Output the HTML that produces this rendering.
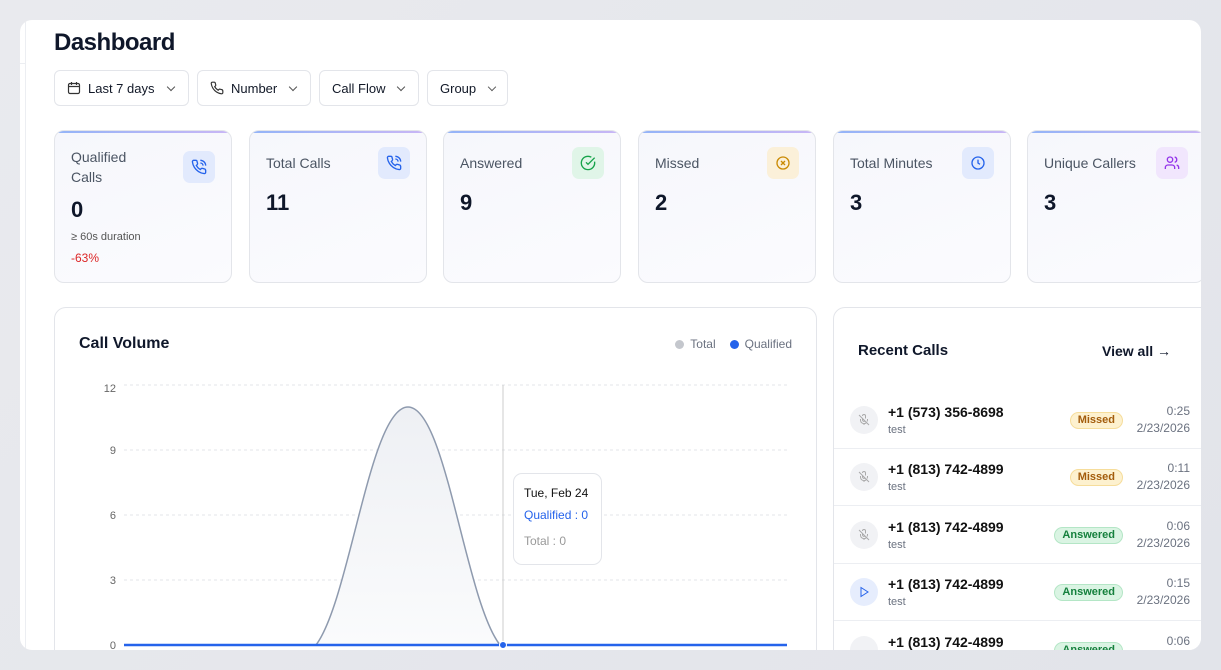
<!DOCTYPE html>
<html><head><meta charset="utf-8"><style>
*{box-sizing:border-box;margin:0;padding:0}
body{width:1221px;height:670px;overflow:hidden;background:linear-gradient(135deg,#e9eaee,#e2e4ea);font-family:"Liberation Sans",sans-serif;color:#0f172a;position:relative}
.win{position:absolute;left:20px;top:20px;width:1181px;height:630px;background:#fff;border-radius:12px;overflow:hidden}
.side{position:absolute;left:0;top:0;width:6px;height:630px;border-right:1px solid #eceef2}
.side:after{content:"";position:absolute;left:0;top:43px;width:6px;border-top:1px solid #eceef2}
h1{position:absolute;left:34px;top:9px;font-size:24px;font-weight:700;letter-spacing:-0.5px}
.btn{position:absolute;top:50px;height:36px;border:1px solid #e3e5ea;border-radius:6px;font-size:13px;display:flex;align-items:center;padding:0 12px;gap:7px;color:#111827}
.btn .ch{width:6px;height:6px;border-right:1.3px solid #555;border-bottom:1.3px solid #555;transform:rotate(45deg);margin-left:6px;margin-top:-3px}
.card{position:absolute;top:110px;width:178px;height:153px;border:1px solid #e3e5ea;border-radius:10px;background:linear-gradient(160deg,#f6f7fc,#fbfbfe);overflow:hidden}
.card:before{content:"";position:absolute;left:0;top:0;right:0;height:2px;background:linear-gradient(90deg,#93b4f7,#c9b6f5)}
.card .t{position:absolute;left:16px;top:22px;font-size:14px;color:#4b5563;line-height:20px}
.card .n{position:absolute;left:16px;top:59px;font-size:22px;font-weight:700}
.ic{position:absolute;right:16px;top:16px;width:32px;height:32px;border-radius:7px;display:flex;align-items:center;justify-content:center}
.panel{position:absolute;border:1px solid #e3e5ea;border-radius:12px;background:#fff}
.row{position:absolute;left:0;width:400px;height:57px;border-bottom:1px solid #eceef2}
.row .av{position:absolute;left:16px;top:14px;width:28px;height:28px;border-radius:50%;background:#f1f2f5;display:flex;align-items:center;justify-content:center}
.row .ph{position:absolute;left:54px;top:12px;font-size:14px;font-weight:600;color:#111}
.row .sub{position:absolute;left:54px;top:32px;font-size:11px;color:#6b7280}
.row .bd{position:absolute;top:20px;height:17px;border-radius:9px;font-size:11px;font-weight:700;padding:0 7px;line-height:15px}
.miss{right:111px;background:#fdf1cf;color:#a35c0c;border:1px solid #f6dd9b}
.ans{right:111px;background:#daf4e3;color:#15803d;border:1px solid #b4e6c6}
.row .du{position:absolute;right:44px;top:11px;font-size:12px;color:#6b7280;text-align:right;line-height:17px}
</style></head><body>
<div class="win">
<div class="side"></div>
<h1>Dashboard</h1>
<div class="btn" style="left:34px;width:135px"><svg width="14" height="14" viewBox="0 0 14 14" fill="none" stroke="#333" stroke-width="1.2"><rect x="1.5" y="2.5" width="11" height="10" rx="1.5"/><path d="M1.5 5.5h11M4.5 1v3M9.5 1v3"/></svg>Last 7 days<span class="ch"></span></div>
<div class="btn" style="left:177px;width:114px"><svg width="14" height="14" viewBox="0 0 24 24" fill="none" stroke="#333" stroke-width="2"><path d="M22 16.9v3a2 2 0 0 1-2.2 2 19.8 19.8 0 0 1-8.6-3.1 19.5 19.5 0 0 1-6-6A19.8 19.8 0 0 1 2.1 4.2 2 2 0 0 1 4.1 2h3a2 2 0 0 1 2 1.7c.1.9.4 1.8.7 2.7a2 2 0 0 1-.5 2.1L8 9.8a16 16 0 0 0 6 6l1.3-1.3a2 2 0 0 1 2.1-.4c.9.3 1.8.6 2.7.7a2 2 0 0 1 1.7 2z"/></svg>Number<span class="ch"></span></div>
<div class="btn" style="left:299px;width:100px">Call Flow<span class="ch"></span></div>
<div class="btn" style="left:407px;width:81px">Group<span class="ch"></span></div>

<div class="card" style="left:34px"><div class="t" style="top:16px;width:80px">Qualified Calls</div><div class="n" style="top:66px">0</div><div style="position:absolute;left:16px;top:100px;font-size:11px;color:#555">≥ 60s duration</div><div style="position:absolute;left:16px;top:120px;font-size:12px;color:#dc2626">-63%</div>
<div class="ic" style="top:20px;background:#e2eafd"><svg width="16" height="16" viewBox="0 0 24 24" fill="none" stroke="#2563eb" stroke-width="2"><path d="M22 16.9v3a2 2 0 0 1-2.2 2 19.8 19.8 0 0 1-8.6-3.1 19.5 19.5 0 0 1-6-6A19.8 19.8 0 0 1 2.1 4.2 2 2 0 0 1 4.1 2h3a2 2 0 0 1 2 1.7c.1.9.4 1.8.7 2.7a2 2 0 0 1-.5 2.1L8 9.8a16 16 0 0 0 6 6l1.3-1.3a2 2 0 0 1 2.1-.4c.9.3 1.8.6 2.7.7a2 2 0 0 1 1.7 2zM14 2a8 8 0 0 1 8 8M14 6a4 4 0 0 1 4 4"/></svg></div></div>
<div class="card" style="left:229px"><div class="t">Total Calls</div><div class="n">11</div><div class="ic" style="background:#e2eafd"><svg width="16" height="16" viewBox="0 0 24 24" fill="none" stroke="#2563eb" stroke-width="2"><path d="M22 16.9v3a2 2 0 0 1-2.2 2 19.8 19.8 0 0 1-8.6-3.1 19.5 19.5 0 0 1-6-6A19.8 19.8 0 0 1 2.1 4.2 2 2 0 0 1 4.1 2h3a2 2 0 0 1 2 1.7c.1.9.4 1.8.7 2.7a2 2 0 0 1-.5 2.1L8 9.8a16 16 0 0 0 6 6l1.3-1.3a2 2 0 0 1 2.1-.4c.9.3 1.8.6 2.7.7a2 2 0 0 1 1.7 2zM14 2a8 8 0 0 1 8 8M14 6a4 4 0 0 1 4 4"/></svg></div></div>
<div class="card" style="left:423px"><div class="t">Answered</div><div class="n">9</div><div class="ic" style="background:#e0f5e8"><svg width="16" height="16" viewBox="0 0 24 24" fill="none" stroke="#16a34a" stroke-width="2"><path d="M21.8 10A10 10 0 1 1 17 3.3"/><path d="M9 11l3 3L22 4"/></svg></div></div>
<div class="card" style="left:618px"><div class="t">Missed</div><div class="n">2</div><div class="ic" style="background:#fbf0d9"><svg width="16" height="16" viewBox="0 0 24 24" fill="none" stroke="#ca8a04" stroke-width="2"><circle cx="12" cy="12" r="9"/><path d="M9 9l6 6M15 9l-6 6"/></svg></div></div>
<div class="card" style="left:813px"><div class="t">Total Minutes</div><div class="n">3</div><div class="ic" style="background:#e2eafd"><svg width="16" height="16" viewBox="0 0 24 24" fill="none" stroke="#2563eb" stroke-width="2"><circle cx="12" cy="12" r="9"/><path d="M12 7v5l3 2"/></svg></div></div>
<div class="card" style="left:1007px"><div class="t">Unique Callers</div><div class="n">3</div><div class="ic" style="background:#f1e6fd"><svg width="16" height="16" viewBox="0 0 24 24" fill="none" stroke="#9333ea" stroke-width="2"><circle cx="9" cy="7" r="4"/><path d="M2 21v-2a4 4 0 0 1 4-4h6a4 4 0 0 1 4 4v2M16 3.1a4 4 0 0 1 0 7.8M22 21v-2a4 4 0 0 0-3-3.9"/></svg></div></div>

<div class="panel" style="left:34px;top:287px;width:763px;height:400px">
<div style="position:absolute;left:24px;top:27px;font-size:16px;font-weight:700">Call Volume</div>
<div style="position:absolute;right:24px;top:29px;font-size:12px;color:#6b7280;display:flex;gap:6px;align-items:center"><span style="width:9px;height:9px;border-radius:50%;background:#c4c7cd"></span>Total<span style="width:9px;height:9px;border-radius:50%;background:#2563eb;margin-left:8px"></span>Qualified</div>
</div>
<svg style="position:absolute;left:0;top:0" width="800" height="630" viewBox="20 20 800 630">
<g stroke="#e3e5ea" stroke-dasharray="3 3"><path d="M124 385H787M124 450H787M124 515H787M124 580H787"/></g>
<g font-family="Liberation Sans" font-size="11" fill="#666" text-anchor="end"><text x="116" y="392">12</text><text x="116" y="454">9</text><text x="116" y="519">6</text><text x="116" y="584">3</text><text x="116" y="649">0</text></g>
<defs><linearGradient id="g" x1="0" y1="0" x2="0" y2="1"><stop offset="0" stop-color="#eef0f4"/><stop offset="1" stop-color="#fafbfc"/></linearGradient></defs>
<path d="M316 645C350 600 370 407 408 407C446 407 465 600 500 645Z" fill="url(#g)" stroke="#8e9aae" stroke-width="1.5"/>
<line x1="503" y1="385" x2="503" y2="645" stroke="#ccc"/>
<line x1="124" y1="645" x2="787" y2="645" stroke="#2563eb" stroke-width="2.5"/>
<circle cx="503" cy="645" r="3.5" fill="#2563eb" stroke="#fff" stroke-width="1"/>
</svg>
<div style="position:absolute;left:493px;top:453px;width:89px;height:92px;border:1px solid #e3e5ea;border-radius:9px;background:#fff;font-size:12px">
<div style="position:absolute;left:10px;top:12px;color:#111">Tue, Feb 24</div>
<div style="position:absolute;left:10px;top:34px;color:#2563eb">Qualified : 0</div>
<div style="position:absolute;left:10px;top:60px;color:#999">Total : 0</div></div>

<div class="panel" style="left:813px;top:287px;width:400px;height:400px;overflow:hidden">
<div style="position:absolute;left:24px;top:34px;font-size:15px;font-weight:700">Recent Calls</div>
<div style="position:absolute;left:268px;top:35px;font-size:14px;font-weight:600">View all →</div>
<div class="row" style="top:84px"><div class="av"><svg width="12" height="12" viewBox="0 0 24 24" fill="none" stroke="#aaa" stroke-width="2"><path d="M2 2l20 20M9 9v3a3 3 0 0 0 5 2M15 9V4a3 3 0 0 0-6 0M19 10v2a7 7 0 0 1-1 3M5 10v2a7 7 0 0 0 12 5M12 19v3"/></svg></div><div class="ph">+1 (573) 356-8698</div><div class="sub">test</div><div class="bd miss">Missed</div><div class="du">0:25<br>2/23/2026</div></div>
<div class="row" style="top:141px"><div class="av"><svg width="12" height="12" viewBox="0 0 24 24" fill="none" stroke="#aaa" stroke-width="2"><path d="M2 2l20 20M9 9v3a3 3 0 0 0 5 2M15 9V4a3 3 0 0 0-6 0M19 10v2a7 7 0 0 1-1 3M5 10v2a7 7 0 0 0 12 5M12 19v3"/></svg></div><div class="ph">+1 (813) 742-4899</div><div class="sub">test</div><div class="bd miss">Missed</div><div class="du">0:11<br>2/23/2026</div></div>
<div class="row" style="top:199px"><div class="av"><svg width="12" height="12" viewBox="0 0 24 24" fill="none" stroke="#aaa" stroke-width="2"><path d="M2 2l20 20M9 9v3a3 3 0 0 0 5 2M15 9V4a3 3 0 0 0-6 0M19 10v2a7 7 0 0 1-1 3M5 10v2a7 7 0 0 0 12 5M12 19v3"/></svg></div><div class="ph">+1 (813) 742-4899</div><div class="sub">test</div><div class="bd ans">Answered</div><div class="du">0:06<br>2/23/2026</div></div>
<div class="row" style="top:256px"><div class="av" style="background:#e6edfd"><svg width="12" height="12" viewBox="0 0 24 24" fill="none" stroke="#2563eb" stroke-width="2"><path d="M6 3l14 9-14 9z"/></svg></div><div class="ph">+1 (813) 742-4899</div><div class="sub">test</div><div class="bd ans">Answered</div><div class="du">0:15<br>2/23/2026</div></div>
<div class="row" style="top:314px"><div class="av"></div><div class="ph">+1 (813) 742-4899</div><div class="sub">test</div><div class="bd ans">Answered</div><div class="du">0:06<br>2/23/2026</div></div>
</div>
</div>
</body></html>
